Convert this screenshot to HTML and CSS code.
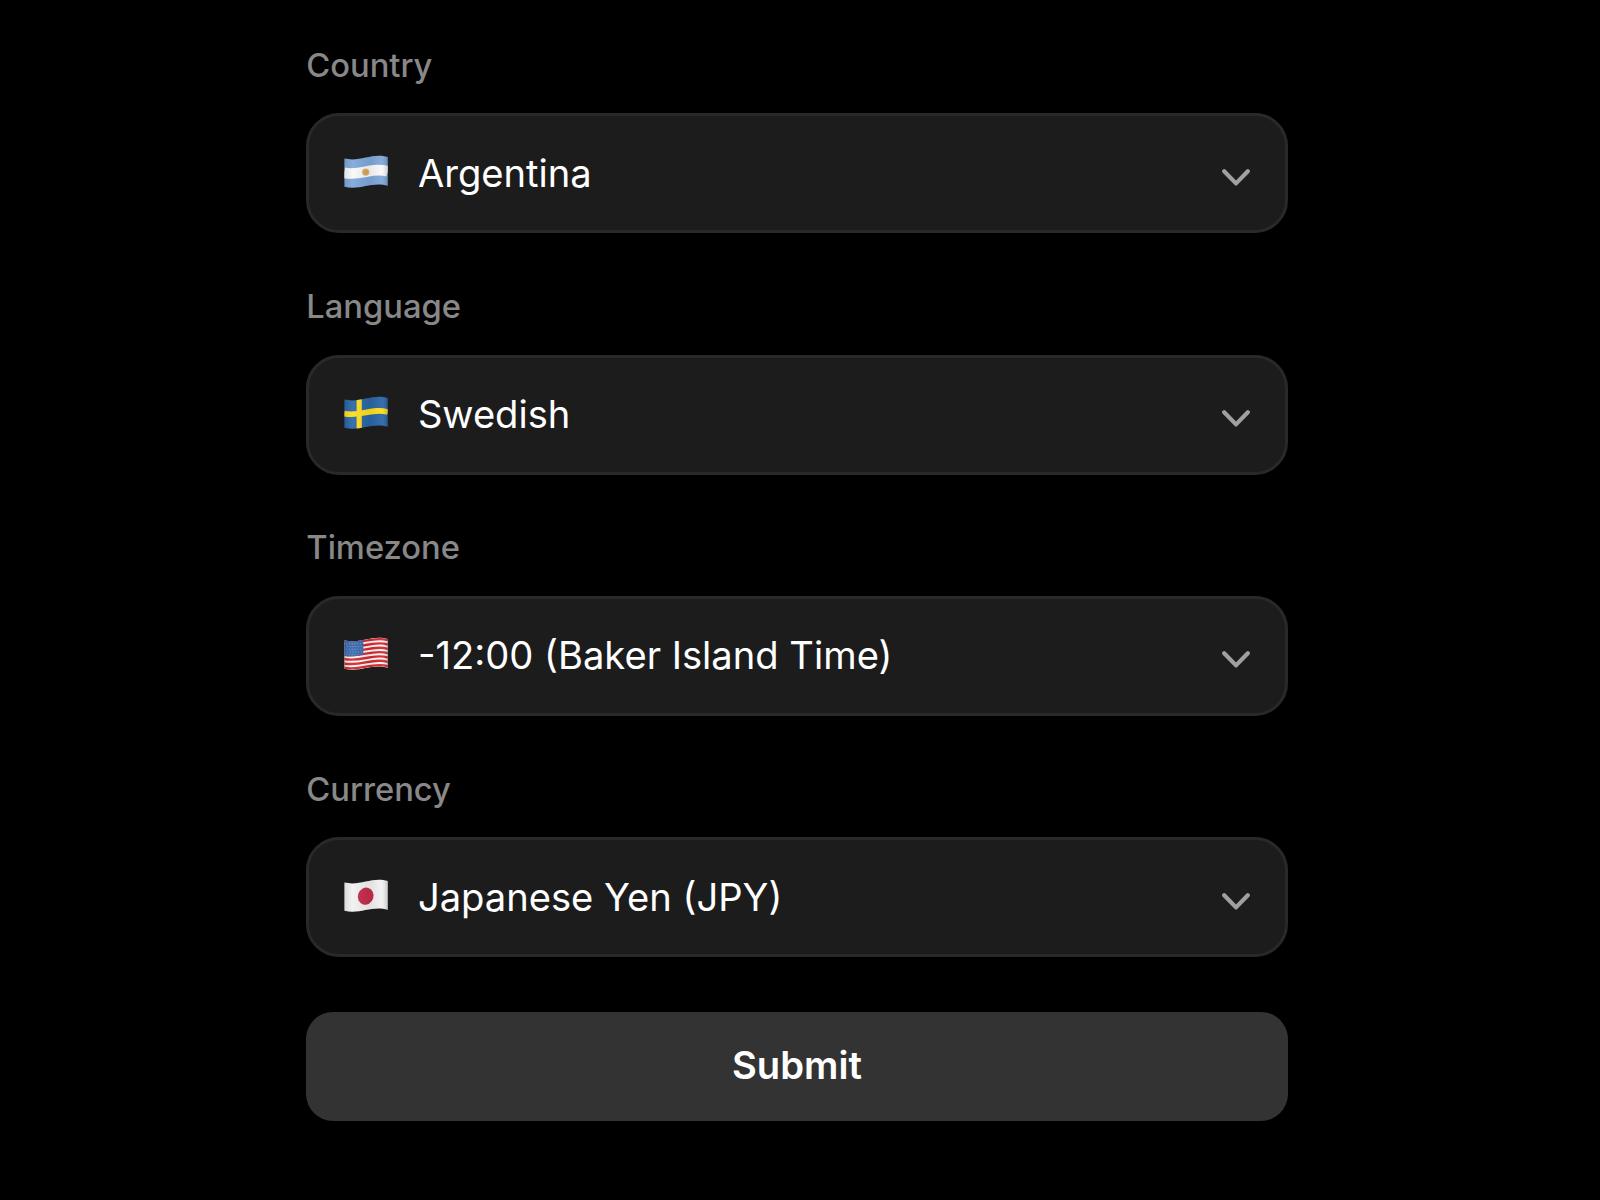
FILE: index.html
```
<!DOCTYPE html>
<html lang="en">

<head>
    <meta charset="UTF-8">
    <meta name="viewport" content="width=device-width, initial-scale=1.0">
    <title>Preferences</title>
    <link rel="stylesheet" href="styles.css">
</head>

<body>

    <!-- shared shapes for the flags -->
    <svg class="defs" width="0" height="0">
        <defs>
            <clipPath id="wave">
                <path d="M.4 3.6C17 7.2 28-2.6 43.8 2.1V30.8C28 26 17 35.4 .4 31.8Z" />
            </clipPath>
            <linearGradient id="shade">
                <stop offset="0" stop-color="#000" stop-opacity=".1" />
                <stop offset=".2" stop-color="#fff" stop-opacity=".08" />
                <stop offset=".6" stop-color="#000" stop-opacity=".06" />
                <stop offset=".85" stop-color="#fff" stop-opacity=".06" />
                <stop offset="1" stop-color="#000" stop-opacity=".2" />
            </linearGradient>
            <path id="stripe" d="M0 3.6C17 7.2 28-2.6 44 2.1" fill="none" />
        </defs>
    </svg>

    <form class="container">

        <div class="field">
            <span class="label">Country</span>
            <div class="select">
                <svg class="flag" viewBox="0 0 44 34">
                    <g clip-path="url(#wave)">
                        <rect width="44" height="34" fill="#7da7d9" />
                        <use href="#stripe" y="14.2" stroke="#f8f8f8" stroke-width="10.6" />
                        <circle cx="21.7" cy="17.2" r="3.6" fill="#d3b17c" />
                        <circle cx="21.7" cy="17.2" r="2.3" fill="#dca044" />
                        <rect width="44" height="34" fill="url(#shade)" />
                    </g>
                </svg>
                <span class="value">Argentina</span>
                <svg class="chevron" viewBox="0 0 28 18">
                    <path d="M2.2 2.3L14 14.4L25.8 2.3" />
                </svg>
            </div>
        </div>

        <div class="field">
            <span class="label">Language</span>
            <div class="select">
                <svg class="flag" viewBox="0 0 44 34">
                    <g clip-path="url(#wave)">
                        <rect width="44" height="34" fill="#2865a6" />
                        <use href="#stripe" y="14" stroke="#fddc1c" stroke-width="5.6" />
                        <path d="M15.2 0V34" stroke="#fddc1c" stroke-width="5.2" />
                        <rect width="44" height="34" fill="url(#shade)" />
                    </g>
                </svg>
                <span class="value">Swedish</span>
                <svg class="chevron" viewBox="0 0 28 18">
                    <path d="M2.2 2.3L14 14.4L25.8 2.3" />
                </svg>
            </div>
        </div>

        <div class="field">
            <span class="label">Timezone</span>
            <div class="select">
                <svg class="flag" viewBox="0 0 44 34">
                    <g clip-path="url(#wave)">
                        <rect width="44" height="34" fill="#faf6f6" />
                        <g stroke="#d4282e" stroke-width="2.4">
                            <use href="#stripe" y="1.1" />
                            <use href="#stripe" y="5.4" />
                            <use href="#stripe" y="9.8" />
                            <use href="#stripe" y="14.1" />
                            <use href="#stripe" y="18.4" />
                            <use href="#stripe" y="22.8" />
                            <use href="#stripe" y="27.1" />
                        </g>
                        <path d="M0 0H19.3V17.3C13 19.6 6 19.8 0 18.8Z" fill="#3767ad" />
                        <path d="M2 6.7H19M3 9.5H19M2 12.3H19M3 15.1H19M2 17.6H15" stroke="#8faad3" stroke-width=".7" stroke-dasharray="1 1.8" />
                        <rect width="44" height="34" fill="url(#shade)" />
                    </g>
                </svg>
                <span class="value">-12:00 (Baker Island Time)</span>
                <svg class="chevron" viewBox="0 0 28 18">
                    <path d="M2.2 2.3L14 14.4L25.8 2.3" />
                </svg>
            </div>
        </div>

        <div class="field">
            <span class="label">Currency</span>
            <div class="select">
                <svg class="flag" viewBox="0 0 44 34">
                    <g clip-path="url(#wave)">
                        <rect width="44" height="34" fill="#f1f1f1" />
                        <ellipse cx="21.7" cy="17.2" rx="7.8" ry="8.7" fill="#c32b48" transform="rotate(18 21.7 17.2)" />
                        <rect width="44" height="34" fill="url(#shade)" />
                    </g>
                </svg>
                <span class="value">Japanese Yen (JPY)</span>
                <svg class="chevron" viewBox="0 0 28 18">
                    <path d="M2.2 2.3L14 14.4L25.8 2.3" />
                </svg>
            </div>
        </div>

        <button class="submit" type="button">Submit</button>

    </form>

</body>

</html>
```
FILE: styles.css
```
* {
    box-sizing: border-box;
}

body {
    margin: 0;
    background-color: #000;
    font-family: Inter, "Liberation Sans", sans-serif;
    color: #fff;
}

.defs {
    display: block;
}

.container {
    display: flex;
    flex-direction: column;
    width: 981.4px;
    margin-left: 306.3px;
    padding-top: 44.9px;
}

.field {
    margin-bottom: 52.9px;
}

.label {
    display: block;
    margin-bottom: 28.4px;
    font-size: 32.7px;
    font-weight: 500;
    line-height: 40px;
    color: #888;
}

.select {
    display: flex;
    align-items: center;
    height: 120px;
    padding: 0 35px;
    background-color: #1c1c1c;
    border: 3px solid #292929;
    border-radius: 33px;
}

.flag {
    width: 44px;
    height: 34px;
    margin-top: -3px;
}

.value {
    flex: 1;
    margin-left: 29.6px;
    font-size: 38.15px;
    line-height: 47px;
}

.chevron {
    width: 28px;
    height: 18px;
    margin-top: 9px;
}

.chevron path {
    fill: none;
    stroke: #a0a0a0;
    stroke-width: 4.2;
    stroke-linecap: round;
    stroke-linejoin: round;
}

.submit {
    height: 109px;
    margin-top: 1.8px;
    padding: 0 0 2px;
    border: none;
    border-radius: 27px;
    background-color: #333;
    font-family: inherit;
    font-size: 38.2px;
    font-weight: 600;
    color: #fff;
}
```
